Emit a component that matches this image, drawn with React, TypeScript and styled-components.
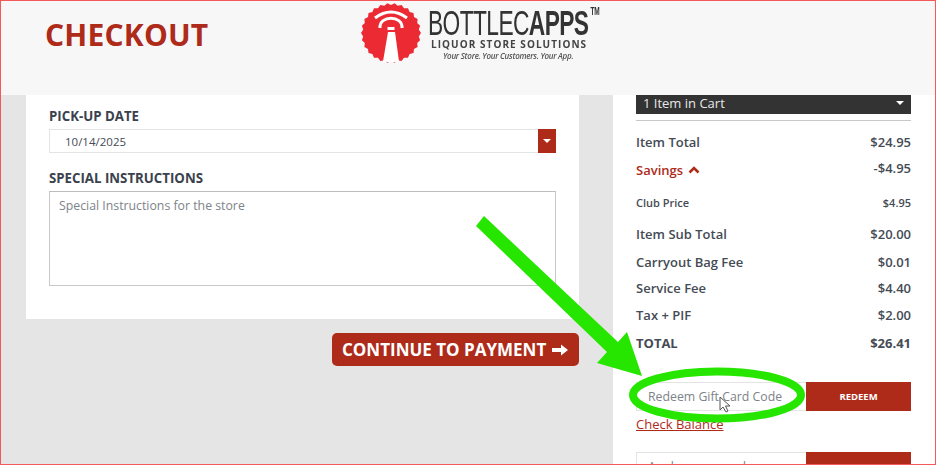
import styled, { createGlobalStyle } from 'styled-components'

const GlobalStyle = createGlobalStyle`
  html, body {
    margin: 0;
    padding: 0;
    background: #fff;
  }
  * {
    box-sizing: border-box;
  }
`

const Page = styled.div`
  position: relative;
  width: 936px;
  height: 465px;
  overflow: hidden;
  display: flex;
  flex-direction: column;
  font-family: "Open Sans", "Liberation Sans", sans-serif;
  color: #454b55;
`

const Frame = styled.div`
  position: absolute;
  inset: 0;
  border: 1px solid #f55a5a;
  pointer-events: none;
`

const Header = styled.header`
  height: 95px;
  flex: none;
  padding-left: 45px;
  display: flex;
  background: #f7f7f8;
`

const Title = styled.h1`
  margin: 13px 0 0;
  width: 316px;
  font-size: 30px;
  line-height: 44px;
  font-weight: 700;
  color: #ae2b1a;
  letter-spacing: 0.2px;
`

const Logo = styled.div`
  display: flex;
  gap: 7px;
  padding-top: 3px;
  filter: blur(0.4px);
`

const LogoText = styled.div`
  display: flex;
  flex-direction: column;
  align-items: flex-start;
`

const Brand = styled.div`
  height: 33px;
  padding-top: 2px;
  transform: scaleX(0.65);
  transform-origin: left top;
  font-family: "Liberation Sans", sans-serif;
  font-size: 35px;
  line-height: 36px;
  color: #333;
  white-space: nowrap;
  letter-spacing: -0.9px;
  b {
    font-weight: 700;
  }
  sup {
    font-size: 10px;
    font-weight: 700;
    line-height: 14px;
    letter-spacing: 0;
    margin-left: 3px;
    vertical-align: top;
  }
`

const Tagline = styled.div`
  margin: 2px 0 0 3px;
  font-size: 10px;
  line-height: 12px;
  font-weight: 700;
  letter-spacing: 1.05px;
  color: #444;
  white-space: nowrap;
`

const Motto = styled.div`
  margin-left: 15px;
  font-size: 8px;
  line-height: 11px;
  font-style: italic;
  font-weight: 600;
  color: #555;
  white-space: nowrap;
  letter-spacing: -0.25px;
`

const Body = styled.main`
  flex: 1;
  display: grid;
  grid-template-columns: 553px 323px;
  column-gap: 34px;
  padding-left: 26px;
  background: #e5e5e5;
  min-height: 0;
`

const LeftColumn = styled.div`
  display: flex;
  flex-direction: column;
  align-items: flex-end;
`

const FormCard = styled.section`
  width: 100%;
  height: 224px;
  padding: 12px 23px 0;
  background: #fff;
`

const Label = styled.label`
  display: block;
  font-size: 13.25px;
  line-height: 18px;
  font-weight: 700;
  color: #3b424d;
`

const DateLabel = styled(Label)`
  margin-bottom: 4px;
`

const InstructionsLabel = styled(Label)`
  margin: 16px 0 4px;
`

const DateField = styled.div`
  height: 24px;
  display: flex;
  align-items: center;
  justify-content: space-between;
  padding-left: 15px;
  border: 1px solid #e4e4e4;
  border-right: none;
  font-size: 11.5px;
`

const DateCaret = styled.span`
  width: 18px;
  height: 24px;
  display: flex;
  align-items: center;
  justify-content: center;
  background: #ae2b1a;
  &::after {
    content: '';
    border-left: 4px solid transparent;
    border-right: 4px solid transparent;
    border-top: 4px solid #fff;
  }
`

const Instructions = styled.div`
  height: 95px;
  padding: 5px 9px;
  border: 1px solid #c9c9c9;
  border-top-color: #bdbdbd;
  font-size: 12.3px;
  line-height: 18px;
  color: #7d8389;
`

const ContinueButton = styled.button`
  width: 247px;
  height: 33px;
  margin-top: 14px;
  padding: 0 0 0 10px;
  display: flex;
  align-items: center;
  gap: 5px;
  border: none;
  border-radius: 5px;
  background: #ae2b1a;
  color: #fff;
  font-family: inherit;
  font-size: 17px;
  font-weight: 700;
  white-space: nowrap;
`

const Summary = styled.aside`
  padding: 0 25px 0 23px;
  background: #fff;
`

const CartBar = styled.div`
  height: 19px;
  padding: 0 7px 3px;
  display: flex;
  align-items: center;
  justify-content: space-between;
  background: #333;
  color: #e8e8e8;
  font-size: 13px;
  &::after {
    content: '';
    border-left: 4px solid transparent;
    border-right: 4px solid transparent;
    border-top: 4px solid #fff;
  }
`

const Divider = styled.hr`
  height: 1px;
  margin: 6px 0 8px;
  border: none;
  background: #c8c8c8;
`

const Row = styled.div<{ $height: number; $small?: boolean; $strong?: boolean }>`
  height: ${props => props.$height}px;
  display: flex;
  align-items: center;
  justify-content: space-between;
  font-size: ${props => (props.$small ? '11px' : '13px')};
  font-weight: ${props => (props.$strong ? 700 : 600)};
`

const SavingsLabel = styled.span`
  display: flex;
  align-items: center;
  gap: 5px;
  color: #ae2b1a;
`

const SavingsAmount = styled.span`
  margin-top: -4px;
`

const CodeRow = styled.div`
  height: 29px;
  display: grid;
  grid-template-columns: 170px 105px;
`

const RedeemRow = styled(CodeRow)`
  margin-top: 25px;
`

const CodeInput = styled.div`
  display: flex;
  align-items: center;
  padding-left: 11px;
  border: 1px solid #e4e4e4;
  border-right: none;
  font-size: 12.3px;
  color: #7d8389;
  white-space: nowrap;
`

const CodeButton = styled.button`
  border: none;
  padding: 0;
  background: #ae2b1a;
  color: #fff;
  font-family: inherit;
  font-size: 9.5px;
  font-weight: 700;
`

const CheckBalance = styled.a`
  display: block;
  height: 41px;
  padding-top: 4px;
  font-size: 13px;
  line-height: 18px;
  color: #ae2b1a;
  text-decoration: underline;
`

const Overlay = styled.svg`
  position: absolute;
  inset: 0;
  pointer-events: none;
`

function LogoMark() {
  const teeth = 26
  const points: string[] = []
  for (let i = 0; i < teeth * 2; i++) {
    const r = i % 2 === 0 ? 30 : 28
    const a = (i / (teeth * 2)) * Math.PI * 2
    points.push(`${(30 + r * Math.cos(a)).toFixed(1)},${(30 + r * Math.sin(a)).toFixed(1)}`)
  }
  return (
    <svg width="60" height="60" viewBox="0 0 60 60">
      <polygon points={points.join(' ')} fill="#ec2a33" />
      <path d="M14 15Q30 3 46 15" fill="none" stroke="#fff" strokeWidth="3" />
      <path d="M19 25C18 12 42 12 41 25" fill="none" stroke="#fff" strokeWidth="3" />
      <path d="M26.500 24H33.500V27H26.500Z" fill="#fff" />
      <path d="M27 29H34L38 58.500Q30 60 22 58.500Z" fill="#fff" />
    </svg>
  )
}

function ChevronUp() {
  return (
    <svg width="12" height="8" viewBox="0 0 12 8">
      <path d="M1.500 6.500L6 2L10.500 6.500" fill="none" stroke="#ae2b1a" strokeWidth="2.600" />
    </svg>
  )
}

function App() {
  return (
    <Page>
      <GlobalStyle />
      <Header>
        <Title>CHECKOUT</Title>
        <Logo>
          <LogoMark />
          <LogoText>
            <Brand>
              BOTTLEC<b>APPS</b><sup>TM</sup>
            </Brand>
            <Tagline>LIQUOR STORE SOLUTIONS</Tagline>
            <Motto>Your Store. Your Customers. Your App.</Motto>
          </LogoText>
        </Logo>
      </Header>
      <Body>
        <LeftColumn>
          <FormCard>
            <DateLabel>PICK-UP DATE</DateLabel>
            <DateField>
              10/14/2025
              <DateCaret />
            </DateField>
            <InstructionsLabel>SPECIAL INSTRUCTIONS</InstructionsLabel>
            <Instructions>Special Instructions for the store</Instructions>
          </FormCard>
          <ContinueButton>
            CONTINUE TO PAYMENT
            <svg width="18" height="14" viewBox="0 0 18 14">
              <path d="M1 5H10V1.500L17 7L10 12.500V9H1Z" fill="#fff" />
            </svg>
          </ContinueButton>
        </LeftColumn>
        <Summary>
          <CartBar>1 Item in Cart</CartBar>
          <Divider />
          <Row $height={26}>
            <span>Item Total</span>
            <span>$24.95</span>
          </Row>
          <Row $height={30}>
            <SavingsLabel>
              Savings
              <ChevronUp />
            </SavingsLabel>
            <SavingsAmount>-$4.95</SavingsAmount>
          </Row>
          <Row $height={35} $small>
            <span>Club Price</span>
            <span>$4.95</span>
          </Row>
          <Row $height={28}>
            <span>Item Sub Total</span>
            <span>$20.00</span>
          </Row>
          <Row $height={27}>
            <span>Carryout Bag Fee</span>
            <span>$0.01</span>
          </Row>
          <Row $height={26}>
            <span>Service Fee</span>
            <span>$4.40</span>
          </Row>
          <Row $height={27}>
            <span>Tax + PIF</span>
            <span>$2.00</span>
          </Row>
          <Row $height={29} $strong>
            <span>TOTAL</span>
            <span>$26.41</span>
          </Row>
          <RedeemRow>
            <CodeInput>Redeem Gift Card Code</CodeInput>
            <CodeButton>REDEEM</CodeButton>
          </RedeemRow>
          <CheckBalance>Check Balance</CheckBalance>
          <CodeRow>
            <CodeInput>Apply promo code</CodeInput>
            <CodeButton>APPLY</CodeButton>
          </CodeRow>
        </Summary>
      </Body>
      <Overlay width="936" height="465" viewBox="0 0 936 465">
        <path d="M476 226L484 216L618 342L627 332L642 376L597 363L607 352Z" fill="#26e600" />
        <ellipse cx="717" cy="395" rx="84" ry="23.500" fill="none" stroke="#26e600" strokeWidth="8" />
        <path
          d="M720 397V410L723 407L726 412L728 411L725.500 406L730 406Z"
          fill="#fff"
          stroke="#555"
          strokeWidth="1"
        />
      </Overlay>
      <Frame />
    </Page>
  )
}

export default App
